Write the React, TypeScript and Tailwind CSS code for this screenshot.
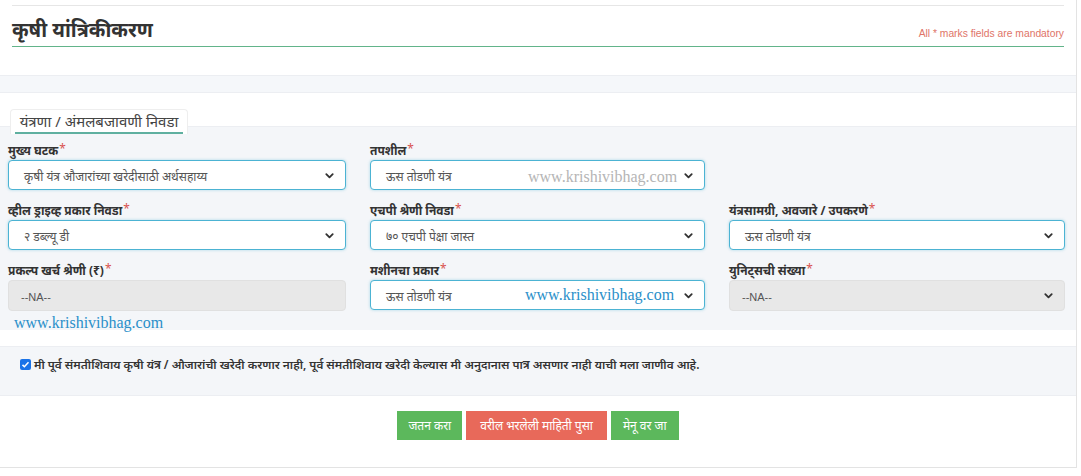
import React from "react";

const Chevron = () => (
  <svg width="11" height="11" viewBox="0 0 24 24" fill="none" stroke="#333" strokeWidth="4" strokeLinecap="round" strokeLinejoin="round">
    <path d="M5 9l7 7 7-7" />
  </svg>
);

const Label = ({ text }: { text: string }) => (
  <div className="h-[18px] flex items-center text-[12px] font-bold text-[#333] leading-none">
    {text}
    <span className="text-[#d9534f] ml-[1px] -mt-[4px] font-normal">*</span>
  </div>
);

const Select = ({ value, children }: { value: string; children?: React.ReactNode }) => (
  <div className="relative h-[30px] rounded-[4px] border border-[#4cb3d3] bg-white shadow-[0_0_3px_rgba(76,179,211,0.45)] flex items-center pl-[15px] pr-[10px] text-[12px] text-[#555]">
    <span className="flex-1 mt-[3px]">{value}</span>
    {children}
    <Chevron />
  </div>
);

const Disabled = ({ chevron }: { chevron?: boolean }) => (
  <div className="h-[31px] rounded-[4px] border border-[#e0e0e0] bg-[#e8e8e8] flex items-center pl-[12px] pr-[10px] text-[11px] text-[#555] font-['Liberation_Sans',sans-serif]">
    <span className="flex-1 mt-[4px]">--NA--</span>
    {chevron && <Chevron />}
  </div>
);

export default function App() {
  return (
    <div className="w-[1081px] h-[476px] bg-white font-['Noto_Sans',sans-serif] overflow-hidden">
      <div className="w-[1077px] h-[468px] border-r border-b border-[#e3e3e3] flex flex-col">
        <div className="mx-[12px] mt-[5px] border-t border-[#e6e6e6]" />
        <div className="mx-[12px] mt-[10px] h-[31px] border-b border-[#62b48a] flex items-end justify-between">
          <div className="text-[20px] font-bold text-[#333] leading-none pb-[6px]">कृषी यांत्रिकीकरण</div>
          <div className="text-[10.3px] text-[#e07467] font-['Liberation_Sans',sans-serif] pb-[5px]">All * marks fields are mandatory</div>
        </div>
        <div className="mt-[28px] h-[18px] bg-[#f5f7fa] border-y border-[#eceef2]" />
        <div className="ml-[10px] mt-[16px] w-[178px] h-[25px] bg-white relative z-10 rounded-t-[4px] border border-b-0 border-[#eeeeee] flex items-center justify-center text-[15px] text-[#444]">
          <span className="-mt-[2px]">यंत्रणा / अंमलबजावणी निवडा</span>
          <div className="absolute left-[4px] right-[4px] bottom-0 h-[2px] bg-[#5fb0a0]" />
        </div>
        <div className="-mt-[8px] h-[204px] bg-[#f4f6f9] border-t border-[#eceef2] pt-[15px] pl-[8px] pr-[10px]">
          <div className="grid grid-cols-[338px_335px_336px] gap-x-[24px] gap-y-[12px]">
            <div>
              <Label text="मुख्य घटक" />
              <Select value="कृषी यंत्र औजारांच्या खरेदीसाठी अर्थसहाय्य" />
            </div>
            <div>
              <Label text="तपशील" />
              <Select value="ऊस तोडणी यंत्र">
                <span className="absolute left-[157px] top-[4px] text-[16px] text-[#b5b5b5] font-['Liberation_Serif',serif]">www.krishivibhag.com</span>
              </Select>
            </div>
            <div />
            <div>
              <Label text="व्हील ड्राइव्ह प्रकार निवडा" />
              <Select value="२ डब्ल्यू डी" />
            </div>
            <div>
              <Label text="एचपी श्रेणी निवडा" />
              <Select value="७० एचपी पेक्षा जास्त" />
            </div>
            <div>
              <Label text="यंत्रसामग्री, अवजारे / उपकरणे" />
              <Select value="ऊस तोडणी यंत्र" />
            </div>
            <div>
              <Label text="प्रकल्प खर्च श्रेणी (₹)" />
              <Disabled />
              <div className="mt-[2px] ml-[6px] text-[16px] leading-[20px] text-[#2a8fc9] font-['Liberation_Serif',serif]">www.krishivibhag.com</div>
            </div>
            <div>
              <Label text="मशीनचा प्रकार" />
              <Select value="ऊस तोडणी यंत्र">
                <span className="absolute left-[154px] top-[2px] text-[16px] text-[#2a8fc9] font-['Liberation_Serif',serif]">www.krishivibhag.com</span>
              </Select>
            </div>
            <div>
              <Label text="युनिट्सची संख्या" />
              <Disabled chevron />
            </div>
          </div>
        </div>
        <div className="mt-[16px] h-[50px] bg-[#f4f6f9] border-y border-[#eceef2] pt-[10px] pl-[20px] flex items-start gap-[3px]">
          <div className="mt-[2px] w-[11px] h-[11px] rounded-[2px] bg-[#1a73e8] flex items-center justify-center">
            <svg width="9" height="9" viewBox="0 0 12 12" fill="none" stroke="white" strokeWidth="2"><path d="M2 6.5l2.5 2.5L10 3" /></svg>
          </div>
          <span className="text-[11.8px] font-semibold text-[#333] leading-[15px]">
            मी पूर्व संमतीशिवाय कृषी यंत्र / औजारांची खरेदी करणार नाही, पूर्व संमतीशिवाय खरेदी केल्यास मी अनुदानास पात्र असणार नाही याची मला जाणीव आहे.
          </span>
        </div>
        <div className="mt-[15px] flex justify-center gap-[4px]">
          <div className="h-[29px] px-[11px] bg-[#5cb85c] text-white text-[12px] flex items-center">जतन करा</div>
          <div className="h-[29px] px-[14px] bg-[#e8695a] text-white text-[12px] flex items-center">वरील भरलेली माहिती पुसा</div>
          <div className="h-[29px] px-[12px] bg-[#5cb85c] text-white text-[12px] flex items-center">मेनू वर जा</div>
        </div>
      </div>
    </div>
  );
}
